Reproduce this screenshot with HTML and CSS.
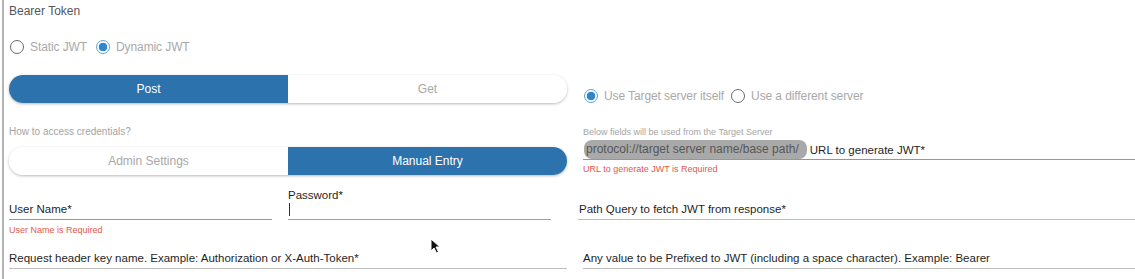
FILE: index.html
```html
<!DOCTYPE html>
<html>
<head>
  <title>Bearer Token</title>
  <link rel="stylesheet" href="styles.css">
</head>
<body>
<div class="panel">
  <div class="title">Bearer Token</div>

  <div class="radios top-radios">
    <label class="radio"><span class="dot"></span>Static JWT</label>
    <label class="radio"><span class="dot on"></span>Dynamic JWT</label>
  </div>

  <div class="cols row-method">
    <div class="segmented">
      <div class="seg active">Post</div>
      <div class="seg">Get</div>
    </div>
    <div class="radios server-radios">
      <label class="radio"><span class="dot on"></span>Use Target server itself</label>
      <label class="radio"><span class="dot"></span>Use a different server</label>
    </div>
  </div>

  <div class="cols row-access">
    <div>
      <div class="hint wide">How to access credentials?</div>
      <div class="segmented">
        <div class="seg">Admin Settings</div>
        <div class="seg active">Manual Entry</div>
      </div>
    </div>
    <div>
      <div class="hint">Below fields will be used from the Target Server</div>
      <div class="url-field invalid">
        <span class="chip">protocol://target server name/base path/</span>
        <span class="label">URL to generate JWT*</span>
      </div>
      <div class="error">URL to generate JWT is Required</div>
    </div>
  </div>

  <div class="cols row-creds">
    <div class="pair">
      <div>
        <div class="field invalid"><span class="label">User Name*</span></div>
        <div class="error">User Name is Required</div>
      </div>
      <div>
        <div class="field focused">
          <span class="label float">Password*</span>
          <span class="caret"></span>
        </div>
      </div>
    </div>
    <div>
      <div class="field shifted"><span class="label">Path Query to fetch JWT from response*</span></div>
    </div>
  </div>

  <div class="cols row-header">
    <div class="field short"><span class="label">Request header key name. Example: Authorization or X-Auth-Token*</span></div>
    <div class="field short"><span class="label">Any value to be Prefixed to JWT (including a space character). Example: Bearer</span></div>
  </div>

  <svg class="pointer" width="12" height="16" viewBox="0 0 12 16">
    <path d="M1 1 L1 13 L4 10 L6.5 15 L8.5 14 L6 9 L10 9 Z" fill="#111" stroke="#fff" stroke-width="1"/>
  </svg>
</div>
</body>
</html>
```

FILE: styles.css
```css
/* Bearer token settings panel */
body {
  margin: 0;
  font-family: "Liberation Sans", Arial, sans-serif;
  background: #fff;
  color: #222;
}

.panel {
  position: relative;
  margin-left: 2px;
  border-left: 2px solid #b4b4b4;
  padding-left: 5px;
  height: 279px;
  box-sizing: border-box;
}

.title {
  font-size: 12px;
  line-height: 22px;
  color: #555;
}

.radios {
  display: flex;
  align-items: center;
  gap: 9px;
  height: 22px;
}

.top-radios {
  margin-top: 14px;
  padding-left: 1px;
}

.radio {
  display: flex;
  align-items: center;
  gap: 6px;
  font-size: 12px;
  letter-spacing: -0.1px;
  color: #a9a9a9;
}

.dot {
  width: 12px;
  height: 12px;
  border: 1.6px solid #6a6a6a;
  border-radius: 50%;
  box-sizing: content-box;
}

.dot.on {
  border-color: #5aa5dc;
  background: radial-gradient(circle, #2f86cc 0 4px, #fff 4.6px);
}

.cols {
  display: grid;
  grid-template-columns: 558px 1fr;
  column-gap: 16px;
}

.row-method {
  margin-top: 17px;
}

.server-radios {
  margin-top: 10px;
  padding-left: 1px;
  gap: 7px;
}

.segmented {
  display: flex;
  height: 28px;
  border-radius: 14px;
  overflow: hidden;
  box-shadow: 0 1px 3px rgba(0, 0, 0, 0.28);
}

.seg {
  flex: 1;
  display: flex;
  align-items: center;
  justify-content: center;
  font-size: 12px;
  color: #a8a8a8;
  background: #fff;
}

.seg.active {
  background: #2c72ad;
  color: #fff;
}

.row-access {
  margin-top: 16px;
}

.hint {
  font-size: 9px;
  line-height: 18px;
  color: #a4a4a4;
  margin-bottom: 6px;
}

.hint.wide {
  font-size: 10px;
}

.url-field {
  display: flex;
  align-items: center;
  gap: 3px;
  height: 19px;
  margin-top: -7px;
  border-bottom: 1px solid #bbb;
}

.chip {
  background: #a9a9a9;
  color: #575757;
  font-size: 12px;
  line-height: 19px;
  padding: 0 8px 0 2px;
  border-radius: 8px;
  margin-left: 1px;
}

.label {
  font-size: 11.5px;
  line-height: 16px;
  color: #1f1f1f;
}

.url-field.invalid {
  border-bottom: 1.5px solid #e3776f;
}

.error {
  font-size: 9px;
  line-height: 18px;
  color: #e25a4a;
}

.row-creds {
  margin-top: 4px;
}

.pair {
  display: grid;
  grid-template-columns: 263px 263px;
  column-gap: 16px;
}

.field {
  position: relative;
  display: flex;
  align-items: flex-end;
  height: 38px;
  padding-bottom: 2px;
  box-sizing: border-box;
  border-bottom: 1px solid #bdbdbd;
}

.field.invalid {
  border-bottom: 1.5px solid #e3776f;
}

.field.focused {
  border-bottom: 1.5px solid #7fa8cf;
}

.field.shifted {
  margin-left: -5px;
  padding-left: 1px;
}

.label.float {
  position: absolute;
  top: 5px;
  left: 0;
}

.caret {
  width: 1px;
  height: 13px;
  background: #333;
  margin-left: 1px;
  margin-bottom: 1px;
}

.row-creds .error {
  margin-top: 1px;
}

.row-header {
  margin-top: 3px;
}

.field.short {
  height: 27px;
}

.pointer {
  position: absolute;
  left: 426px;
  top: 238px;
}
```
